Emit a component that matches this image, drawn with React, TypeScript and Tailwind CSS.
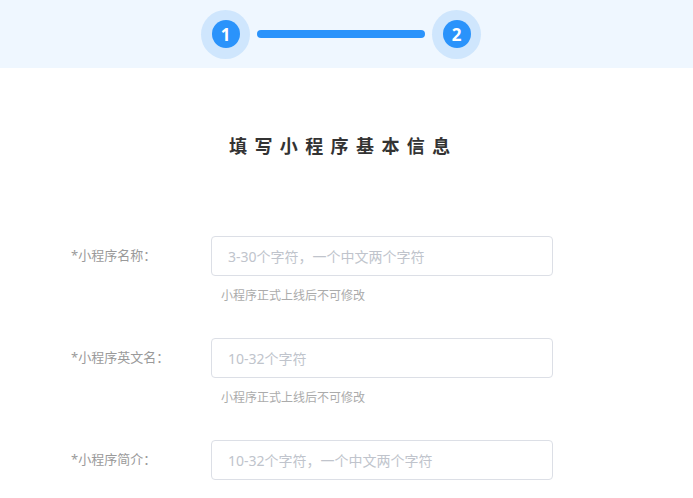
import React from "react";

const font = { fontFamily: '"Noto Sans", "Noto Sans CJK SC", sans-serif' };

function Step({ n }: { n: number }) {
  return (
    <div className="w-[49px] h-[49px] shrink-0 rounded-full bg-[#cfe6fd] flex items-center justify-center">
      <div className="w-[28px] h-[28px] rounded-full bg-[#2a93fb] flex items-center justify-center text-white text-[17px] font-bold leading-none">
        {n}
      </div>
    </div>
  );
}

function Row({ label, placeholder, hint }: { label: string; placeholder: string; hint?: string }) {
  return (
    <div className="flex flex-col">
      <div className="flex items-center">
        <div className="w-[211px] shrink-0 pl-[71px] text-[13px] text-[#9a9a9a] whitespace-nowrap">{label}</div>
        <div className="w-[342px] shrink-0 h-[40px] border border-[#dcdfe6] rounded-[4px] flex items-center pl-[16px] text-[14px] text-[#c0c4cc] whitespace-nowrap">
          {placeholder}
        </div>
      </div>
      {hint ? (
        <div className="pl-[221px] mt-[12px] text-[12px] leading-[16px] text-[#ababab]">{hint}</div>
      ) : null}
    </div>
  );
}

export default function App() {
  return (
    <div className="w-[693px] h-[498px] bg-white overflow-hidden" style={font}>
      <div className="h-[68px] bg-[#eff7ff] flex items-center pl-[201px]">
        <Step n={1} />
        <div className="w-[168px] h-[8px] rounded-full bg-[#2a93fb] mx-[7px]" />
        <Step n={2} />
      </div>
      <div className="pt-[66px] pl-[229px] text-[18px] font-bold text-[#333] tracking-[7.4px] leading-[24px]">
        填写小程序基本信息
      </div>
      <div className="mt-[78px] flex flex-col gap-[34px]">
        <Row label="*小程序名称：" placeholder="3-30个字符，一个中文两个字符" hint="小程序正式上线后不可修改" />
        <Row label="*小程序英文名：" placeholder="10-32个字符" hint="小程序正式上线后不可修改" />
        <Row label="*小程序简介：" placeholder="10-32个字符，一个中文两个字符" />
      </div>
    </div>
  );
}
